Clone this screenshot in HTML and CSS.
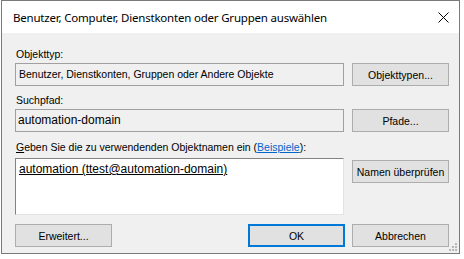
FILE: index.html
```html
<!DOCTYPE html>
<html lang="de">
<head>
  <meta charset="UTF-8">
  <title>Benutzer, Computer, Dienstkonten oder Gruppen auswählen</title>
  <link rel="stylesheet" href="styles.css">
</head>
<body>
  <div class="dialog">
    <div class="titlebar">
      <span class="title">Benutzer, Computer, Dienstkonten oder Gruppen auswählen</span>
      <svg class="close" width="11" height="11" viewBox="0 0 11 11">
        <path d="M0.5 0.5 L10.5 10.5 M10.5 0.5 L0.5 10.5" stroke="#000" stroke-width="1" fill="none"/>
      </svg>
    </div>

    <div class="content">
      <div class="label label-first">Objekttyp:</div>
      <div class="row">
        <div class="field">Benutzer, Dienstkonten, Gruppen oder Andere Objekte</div>
        <button class="btn">Objekttypen...</button>
      </div>

      <div class="label">Suchpfad:</div>
      <div class="row">
        <div class="field field-large">automation-domain</div>
        <button class="btn">Pfade...</button>
      </div>

      <div class="label label-names"><u>G</u>eben Sie die zu verwendenden Objektnamen ein (<a href="#">Beispiele</a>):</div>
      <div class="row row-names">
        <div class="names"><u>automation (ttest@automation-domain)</u></div>
        <button class="btn btn-check">Namen überprüfen</button>
      </div>

      <div class="footer">
        <button class="btn">Erweitert...</button>
        <div class="footer-right">
          <button class="btn btn-default">OK</button>
          <button class="btn">Abbrechen</button>
        </div>
      </div>
    </div>

    <svg class="grip" width="8" height="8" viewBox="0 0 8 8">
      <rect x="6" y="0" width="2" height="2" fill="#b8b8b8"/>
      <rect x="3" y="3" width="2" height="2" fill="#b8b8b8"/>
      <rect x="6" y="3" width="2" height="2" fill="#b8b8b8"/>
      <rect x="0" y="6" width="2" height="2" fill="#b8b8b8"/>
      <rect x="3" y="6" width="2" height="2" fill="#b8b8b8"/>
      <rect x="6" y="6" width="2" height="2" fill="#b8b8b8"/>
    </svg>
  </div>
</body>
</html>
```

FILE: styles.css
```css
* {
  margin: 0;
  padding: 0;
  box-sizing: border-box;
}

body {
  background-color: #fff;
  font-family: "Liberation Sans", Arial, sans-serif;
  font-size: 10.5px;
  color: #000;
}

.dialog {
  position: relative;
  margin-left: 1px;
  width: 459px;
  height: 254px;
  border: 1px solid #7a7a7a;
  background-color: #f0f0f0;
  display: flex;
  flex-direction: column;
}

.titlebar {
  flex-shrink: 0;
  height: 32px;
  background-color: #fff;
  display: flex;
  align-items: center;
  justify-content: space-between;
  padding: 0 10px 0 11px;
}

.title {
  font-family: "Noto Sans", "Open Sans", sans-serif;
  font-size: 11.5px;
  letter-spacing: -0.2px;
}

.close {
  display: block;
  margin-top: 1px;
}

.content {
  flex: 1;
  padding: 0 10px 0 13px;
  display: flex;
  flex-direction: column;
}

.label {
  height: 16px;
  line-height: 16px;
  margin-top: 6px;
  padding-left: 1px;
}

.label-first {
  margin-top: 13px;
}

.label-names {
  margin-top: 7px;
}

.label a {
  color: #0066cc;
}

.row {
  display: flex;
  justify-content: space-between;
  align-items: flex-start;
  margin-top: 1px;
}

.field {
  width: 329px;
  height: 23px;
  line-height: 20px;
  padding-left: 3px;
  border: 1px solid #a0a0a0;
  background-color: #f0f0f0;
}

.field-large {
  font-size: 12px;
  padding-left: 2px;
}

.btn {
  width: 97px;
  height: 23px;
  font-family: "Liberation Sans", Arial, sans-serif;
  font-size: 10.5px;
  color: #000;
  background-color: #e1e1e1;
  border: 1px solid #adadad;
}

.row-names {
  margin-top: 3px;
}

.names {
  width: 329px;
  height: 57px;
  padding: 2px 0 0 3px;
  font-size: 12px;
  line-height: 16px;
  background-color: #fff;
  border: 1px solid;
  border-color: #828282 #e3e3e3 #e3e3e3 #828282;
}

.btn-check {
  margin-top: 2px;
}

.footer {
  display: flex;
  justify-content: space-between;
  margin-top: 9px;
}

.footer-right {
  display: flex;
  gap: 7px;
}

.btn-default {
  border: 2px solid #0078d7;
}

.grip {
  position: absolute;
  right: 2px;
  bottom: 2px;
}
```
